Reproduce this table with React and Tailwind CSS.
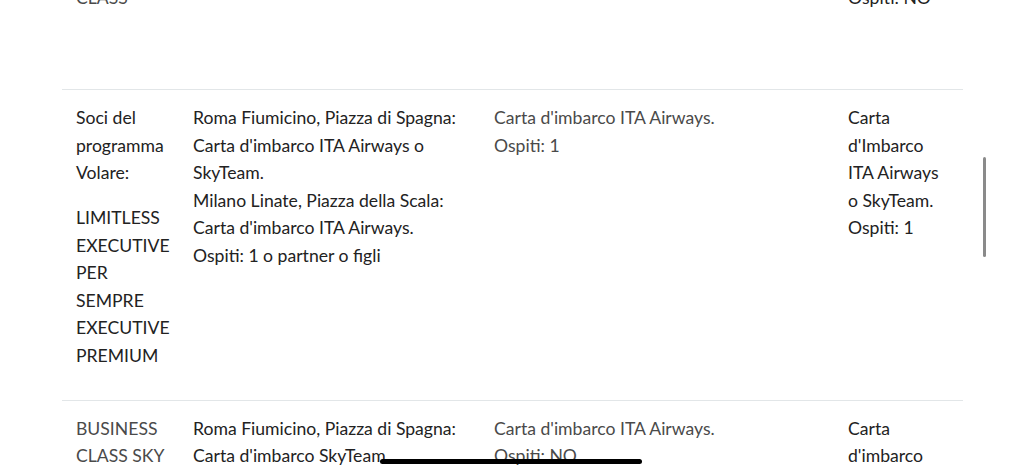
import React from 'react';

const font = { fontFamily: 'Lato, "Noto Sans", sans-serif' };

const Cell = ({ children, className = '' }) => (
  <div className={`px-[14px] ${className}`}>{children}</div>
);

const rows = [
  {
    id: 'premium',
    cols: [
      <>
        <p className="mb-[17.5px] text-[#222]">Soci del programma Volare:</p>
        <p className="mb-[17.5px] text-[#222]">LIMITLESS EXECUTIVE PER SEMPRE EXECUTIVE PREMIUM</p>
      </>,
      <p className="text-[#222]">
        Roma Fiumicino, Piazza di Spagna: Carta d'imbarco ITA Airways o SkyTeam.
        <br />
        Milano Linate, Piazza della Scala: Carta d'imbarco ITA Airways.
        <br />
        Ospiti: 1 o partner o figli
      </p>,
      <p className="text-[#4a4a4a]">
        Carta d'imbarco ITA Airways.
        <br />
        Ospiti: 1
      </p>,
      <p className="text-[#222]">
        Carta d'Imbarco ITA Airways o SkyTeam.
        <br />
        Ospiti: 1
      </p>,
    ],
  },
  {
    id: 'business',
    cols: [
      <p className="text-[#4a4a4a]">BUSINESS CLASS SKY PRIORITY</p>,
      <p className="text-[#222]">
        Roma Fiumicino, Piazza di Spagna: Carta d'imbarco SkyTeam.
        <br />
        Ospiti: NO
      </p>,
      <p className="text-[#4a4a4a]">
        Carta d'imbarco ITA Airways.
        <br />
        Ospiti: NO
      </p>,
      <p className="text-[#222]">Carta d'imbarco SkyTeam. Ospiti: NO</p>,
    ],
  },
];

const grid = 'grid grid-cols-[117px_301px_354px_129px]';

export default function App() {
  return (
    <div className="relative h-[473px] w-[1024px] overflow-hidden bg-white" style={font}>
      <div className="-mt-[16px] ml-[62px] w-[901px] text-[17.6px] leading-[27.5px]">
        {/* tail of the previous row */}
        <div className={`${grid} pb-[77.5px]`}>
          <Cell><p className="text-[#4a4a4a]">CLASS</p></Cell>
          <Cell />
          <Cell />
          <Cell className="pr-[20px]"><p className="text-[#222]">Ospiti: NO</p></Cell>
        </div>

        {rows.map((row) => (
          <div key={row.id} className={`${grid} border-t border-[#e2e6e8] pt-[14px] pb-[13px]`}>
            {row.cols.map((c, i) => (
              <Cell key={i} className={i === 3 ? 'pr-[20px]' : ''}>{c}</Cell>
            ))}
          </div>
        ))}
      </div>

      {/* scroll indicator */}
      <div className="absolute left-[983px] top-[157px] h-[100px] w-[3px] rounded-full bg-[#8a8a8a]" />
      {/* home indicator */}
      <div className="absolute left-[380px] top-[459px] h-[5px] w-[262px] rounded-full bg-black" />
    </div>
  );
}
